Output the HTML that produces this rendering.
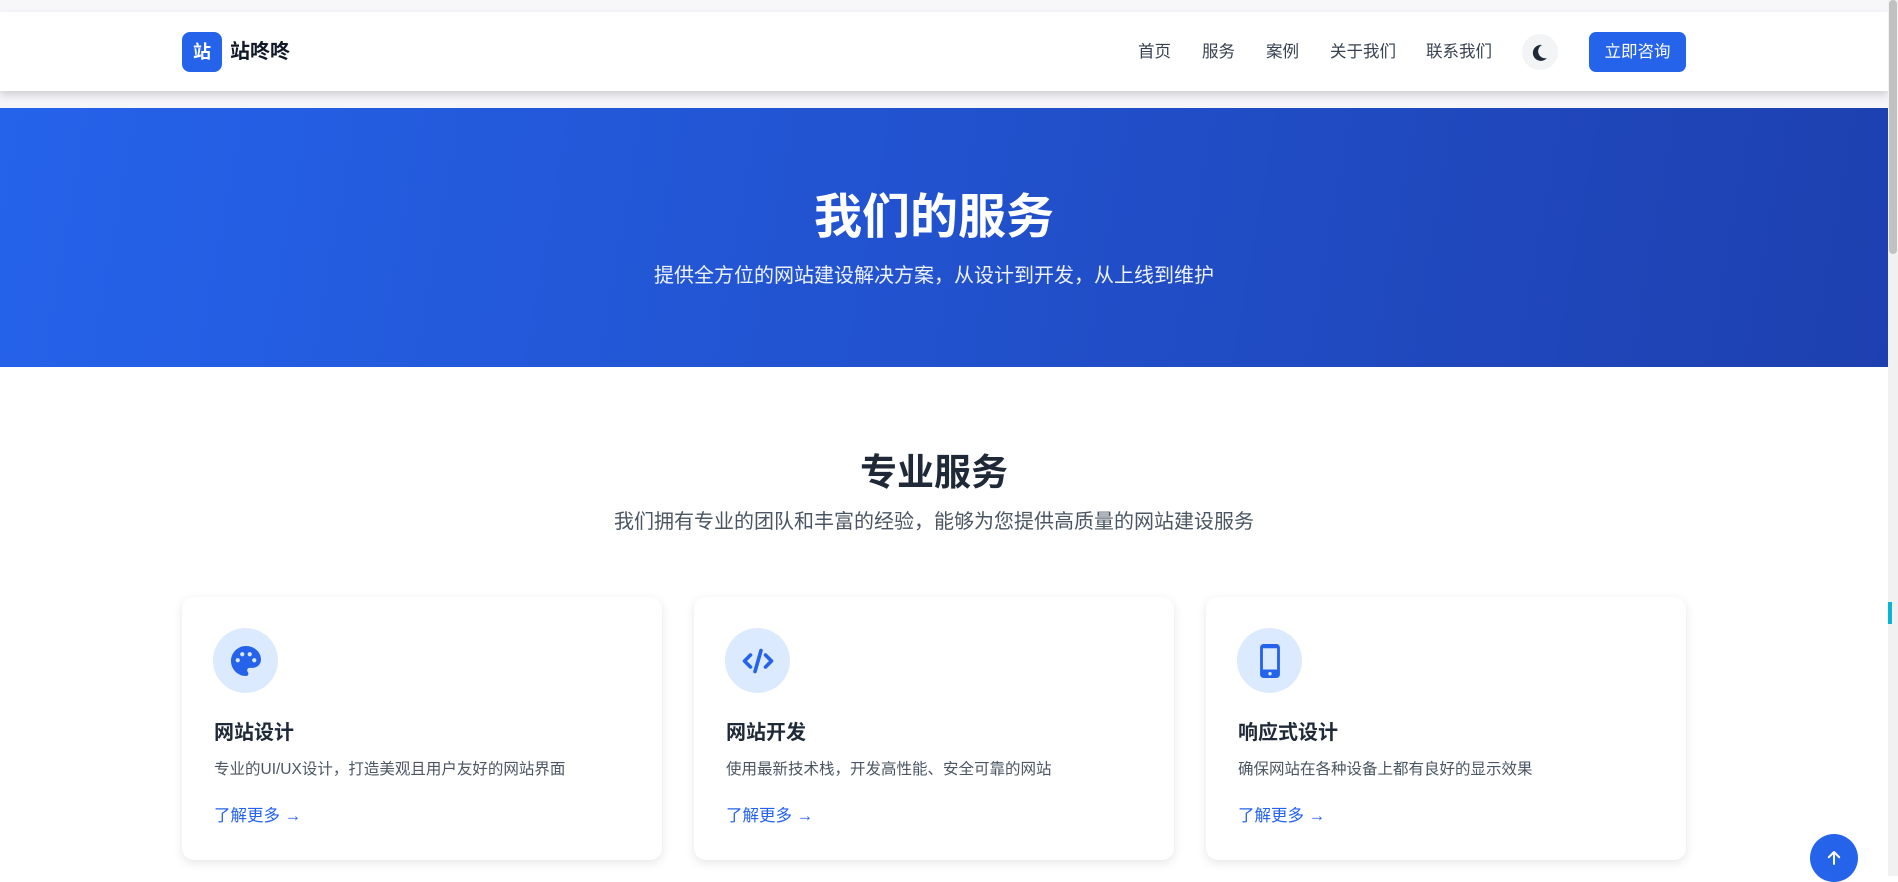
<!DOCTYPE html>
<html><head><meta charset="utf-8"><style>
*{margin:0;padding:0;box-sizing:border-box}
body{width:1898px;height:876px;overflow:hidden;background:#fff;font-family:"Liberation Sans","Noto Sans CJK SC",sans-serif;position:relative}
.top{position:absolute;left:0;top:0;width:1888px;height:12px;background:#f7f7fa}
.gap{position:absolute;left:0;top:91px;width:1888px;height:17px;background:#f6f6f9}
.hdr{position:absolute;left:0;top:12px;width:1888px;height:79px;background:#fff;box-shadow:0 4px 8px rgba(0,0,0,.16)}
.logo{position:absolute;left:182px;top:32px;width:40px;height:40px;border-radius:8px;background:#2563eb;color:#fff;font-weight:bold;font-size:18px;line-height:40px;text-align:center}
.brand{position:absolute;left:230px;top:38px;font-size:20px;font-weight:bold;color:#111827;line-height:28px}
.nav{position:absolute;top:40px;font-size:16.5px;color:#374151;line-height:24px}
.moon{position:absolute;left:1522px;top:34px;width:36px;height:36px;border-radius:50%;background:#f3f4f6}
.btn{position:absolute;left:1589px;top:32px;width:97px;height:40px;border-radius:7px;background:#2563eb;color:#fff;font-size:16.5px;line-height:40px;text-align:center}
.hero{position:absolute;left:0;top:108px;width:1888px;height:259px;background:linear-gradient(100deg,#2563eb,#1e40af)}
.c{position:absolute;left:0;width:1868px;text-align:center}
.card{position:absolute;top:597px;width:480px;height:263px;border-radius:12px;background:#fff;box-shadow:0 3px 10px rgba(0,0,0,.1)}
.ic{position:absolute;left:31px;top:31px;width:65px;height:65px;border-radius:50%;background:#dbeafe;display:flex;align-items:center;justify-content:center}
.ct{position:absolute;left:32px;top:119px;font-size:20px;font-weight:bold;color:#1f2937}
.cd{position:absolute;left:32px;top:160px;font-size:15.5px;color:#4b5563}
.cl{position:absolute;left:32px;top:205px;font-size:16.5px;color:#2563eb}
.sb{position:absolute;left:1888px;top:0;width:10px;height:876px;background:#f1f1f1}
</style></head><body>
<div class="top"></div><div class="gap"></div><div class="hdr"></div>
<div class="logo">站</div><div class="brand">站咚咚</div>
<div class="nav" style="left:1138px">首页</div>
<div class="nav" style="left:1202px">服务</div>
<div class="nav" style="left:1266px">案例</div>
<div class="nav" style="left:1330px">关于我们</div>
<div class="nav" style="left:1426px">联系我们</div>
<div class="moon"><svg width="36" height="36" viewBox="0 0 36 36"><path d="M20 11a8 8 0 1 0 5 13a7 7 0 0 1-5-13z" fill="#1f2937"/></svg></div>
<div class="btn">立即咨询</div>
<div class="hero"></div>
<div class="c" style="top:188px;font-size:48px;font-weight:bold;color:#fff;line-height:60px">我们的服务</div>
<div class="c" style="top:262px;font-size:20px;color:#eef2ff;line-height:28px">提供全方位的网站建设解决方案，从设计到开发，从上线到维护</div>
<div class="c" style="top:450px;font-size:37px;font-weight:bold;color:#1f2937;line-height:46px">专业服务</div>
<div class="c" style="top:508px;font-size:20px;color:#4b5563;line-height:28px">我们拥有专业的团队和丰富的经验，能够为您提供高质量的网站建设服务</div>

<div class="card" style="left:182px"><div class="ic"><svg width="36" height="36" viewBox="0 0 24 24"><path d="M12 2C6.5 2 2 6.5 2 12s4.5 10 10 10c1 0 1.6-.8 1.6-1.6 0-.5-.2-.8-.4-1.1-.3-.3-.4-.7-.4-1.1 0-.9.7-1.6 1.6-1.6h2c3 0 5.6-2.5 5.6-5.6C22 6 17.5 2 12 2z" fill="#2563eb"/><circle cx="6.5" cy="11.5" r="1.4" fill="#dbeafe"/><circle cx="9.5" cy="7.5" r="1.4" fill="#dbeafe"/><circle cx="14.5" cy="7.5" r="1.4" fill="#dbeafe"/><circle cx="17.5" cy="11.5" r="1.4" fill="#dbeafe"/></svg></div><div class="ct">网站设计</div><div class="cd">专业的UI/UX设计，打造美观且用户友好的网站界面</div><div class="cl">了解更多 →</div></div>
<div class="card" style="left:694px"><div class="ic"><svg width="36" height="36" viewBox="0 0 24 24" fill="none" stroke="#2563eb" stroke-width="2.4" stroke-linecap="round" stroke-linejoin="round"><path d="M7 8l-4 4 4 4M17 8l4 4-4 4M14 5l-4 14"/></svg></div><div class="ct">网站开发</div><div class="cd">使用最新技术栈，开发高性能、安全可靠的网站</div><div class="cl">了解更多 →</div></div>
<div class="card" style="left:1206px"><div class="ic"><svg width="24" height="34" viewBox="0 0 16 24"><rect x="1" y="0" width="14" height="24" rx="2.5" fill="#2563eb"/><rect x="3" y="3" width="10" height="15" fill="#dbeafe"/><circle cx="8" cy="21" r="1.2" fill="#dbeafe"/></svg></div><div class="ct">响应式设计</div><div class="cd">确保网站在各种设备上都有良好的显示效果</div><div class="cl">了解更多 →</div></div>

<div style="position:absolute;left:1810px;top:834px;width:48px;height:48px;border-radius:50%;background:#2563eb;display:flex;align-items:center;justify-content:center"><svg width="18" height="18" viewBox="0 0 24 24" fill="none" stroke="#fff" stroke-width="2.6" stroke-linecap="round" stroke-linejoin="round"><path d="M12 20V4M5 11l7-7 7 7"/></svg></div>
<div class="sb"><div style="position:absolute;left:1px;top:0;width:8px;height:254px;background:#c1c1c1;border-radius:4px"></div><div style="position:absolute;left:0;top:602px;width:4px;height:22px;background:#06b6d4"></div></div>
</body></html>
